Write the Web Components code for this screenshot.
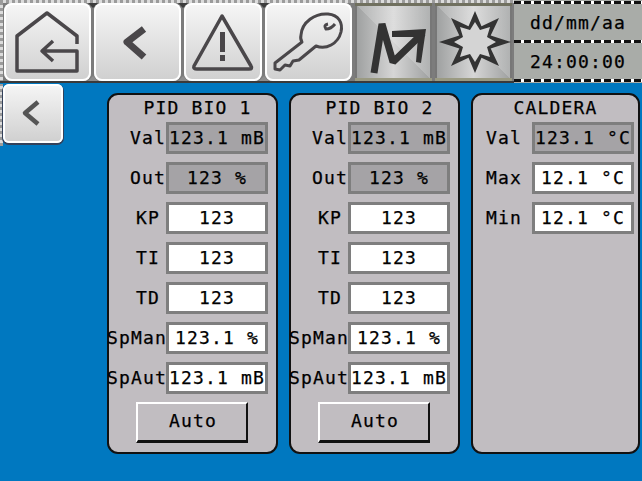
<!DOCTYPE html>
<html lang="es">
<head>
<meta charset="utf-8">
<title>PID BIO</title>
<style>
    html, body { margin: 0; height: 100%; background: #0078c0; overflow: hidden; }
    body { font: 18px "DejaVu Sans Mono", monospace; letter-spacing: 1.16px; color: #000; -webkit-text-stroke: 0.25px #000; }
    svg { display: block; width: 100%; height: 100%; }
    .line { fill: none; stroke: #4a474a; stroke-width: 3.5; stroke-linejoin: round; }
    .metal { fill: #333; stroke: none; }
</style>
</head>
<body>
<hmi-screen>
    <hmi-topbar slot="top">
        <hmi-button style="width:87px">
            <svg viewBox="4 3 87 78"><path class="line" d="M77 44V36L47 13 17 36V71H77V51H42M53 41 42 51 53 61"/></svg>
        </hmi-button>
        <hmi-button style="width:87px">
            <svg viewBox="94 3 87 78"><path class="line" style="stroke-width:7" d="M144 29 127 42 144 57"/></svg>
        </hmi-button>
        <hmi-button style="width:78px">
            <svg viewBox="184 3 78 78">
                <path class="line" d="M222 16 194 66Q193 69 197 69H249Q253 69 251 66Z"/>
                <path d="M220 32H225V52H220ZM220 55H225V61H220Z" fill="#4a474a"/>
            </svg>
        </hmi-button>
        <hmi-button style="width:87px" last>
            <svg viewBox="265 3 87 78">
                <path class="line" style="stroke-width:3" d="M301 35C302 22 315 13 328 14 339 15 343 23 341 32 338 44 326 50 316 46L299 60 293 61 290 66 285 65 280 70 275 69 275 63 302 42Q300 39 301 35Z"/>
                <path class="line" style="stroke-width:3" d="M328 24Q323 25 326 29 331 29 335 24"/>
            </svg>
        </hmi-button>
        <hmi-button style="width:77px" metal>
            <svg viewBox="355 3 77 78">
                <path d="M374 73 382 24 393 62 423 33" fill="none" stroke="#333" stroke-width="7" stroke-linejoin="bevel"/>
                <path class="metal" d="M392 31 426 29 421 63 416 62 418 37 392 37Z"/>
            </svg>
        </hmi-button>
        <hmi-button style="width:77px" metal>
            <svg viewBox="-40 -39 77 78">
                <path class="metal" d="M0-31 6.500-15.700 24-24 15.700-6.500 36 0 15.700 6.500 24 24 6.500 15.700 0 31-6.500 15.700-24 24-15.700 6.500-36 0-15.700-6.500-24-24-6.500-15.700Z"/>
                <path fill="#d4d4d4" d="M0-20 5-12 15-15 12-5 21 0 12 5 15 15 5 12 0 20-5 12-15 15-12 5-21 0-12-5-15-15-5-12Z"/>
            </svg>
        </hmi-button>
        <hmi-clock date="dd/mm/aa" time="24:00:00"></hmi-clock>
    </hmi-topbar>

    <hmi-side slot="side">
        <svg viewBox="3 84 60 59"><path class="line" style="stroke-width:4.500;stroke:#555" d="M38 102 25 113 38 124"/></svg>
    </hmi-side>

    <hmi-panel title="PID BIO 1" style="width:171px">
        <hmi-field label="Val" value="123.1 mB" readonly></hmi-field>
        <hmi-field label="Out" value="123 %" readonly></hmi-field>
        <hmi-field label="KP" value="123"></hmi-field>
        <hmi-field label="TI" value="123"></hmi-field>
        <hmi-field label="TD" value="123"></hmi-field>
        <hmi-field label="SpMan" value="123.1 %" wide></hmi-field>
        <hmi-field label="SpAut" value="123.1 mB" wide></hmi-field>
        <hmi-action>Auto</hmi-action>
    </hmi-panel>
    <hmi-panel title="PID BIO 2" style="width:171px">
        <hmi-field label="Val" value="123.1 mB" readonly></hmi-field>
        <hmi-field label="Out" value="123 %" readonly></hmi-field>
        <hmi-field label="KP" value="123"></hmi-field>
        <hmi-field label="TI" value="123"></hmi-field>
        <hmi-field label="TD" value="123"></hmi-field>
        <hmi-field label="SpMan" value="123.1 %" wide></hmi-field>
        <hmi-field label="SpAut" value="123.1 mB" wide></hmi-field>
        <hmi-action>Auto</hmi-action>
    </hmi-panel>
    <hmi-panel title="CALDERA" narrow style="width:169px">
        <hmi-field label="Val" value="123.1 °C" readonly></hmi-field>
        <hmi-field label="Max" value="12.1 °C"></hmi-field>
        <hmi-field label="Min" value="12.1 °C"></hmi-field>
    </hmi-panel>
</hmi-screen>

<script>
"use strict";
// small helper, every element here is just a style + markup in an open shadow root
class HmiElement extends HTMLElement {
    connectedCallback() {
        this.attachShadow({ mode: 'open' }).innerHTML = this.render();
    }
}

class HmiScreen extends HmiElement {
    render() {
        return `
            <style>
                :host { display: grid; grid-template: "top top" 83px "side main" 1fr / 107px 1fr; height: 481px; }
                top-area { grid-area: top; display: block; }
                side-area { grid-area: side; display: block; }
                main { grid-area: main; display: flex; gap: 11px; padding-top: 10px; align-items: flex-start; }
            </style>
            <top-area><slot name="top"></slot></top-area>
            <side-area><slot name="side"></slot></side-area>
            <main><slot></slot></main>
        `;
    }
}

class HmiTopbar extends HmiElement {
    render() {
        return `
            <style>
                :host {
                    display: flex;
                    height: 83px;
                    box-sizing: border-box;
                    padding: 3px 0 2px 4px;
                    gap: 3px;
                    background:
                        repeating-linear-gradient(90deg, #9b9b9b 0 3px, #dcdcdc 3px 6px) 0 0 / 100% 3px no-repeat,
                        repeating-linear-gradient(0deg, #9b9b9b 0 3px, #dcdcdc 3px 6px) 0 0 / 3px 100% no-repeat,
                        linear-gradient(#7c7c7c, #7c7c7c);
                    box-shadow: inset 0 -2px 0 #3a3a3a;
                }
            </style>
            <slot></slot>
        `;
    }
}

class HmiButton extends HmiElement {
    render() {
        return `
            <style>
                :host {
                    display: block;
                    position: relative;
                    height: 78px;
                    border-radius: 8px;
                    background: linear-gradient(#f6f6f6, #cfcfcf);
                    box-shadow: inset 0 0 0 2px #fff;
                }
                :host([metal]) {
                    border-radius: 0;
                    background:
                        linear-gradient(to top right, transparent 50%, rgba(255, 255, 255, .18) 50%),
                        linear-gradient(90deg, #9c9e9e, #d6d6d6 50%, #9c9e9e);
                    box-shadow: inset 0 3px 0 #70705f, inset 0 -3px 0 #9a9a82, inset 2px 0 0 #777, inset -2px 0 0 #777;
                }
                :host(:not([metal]):not([last]))::before,
                :host(:not([metal]):not([last]))::after {
                    content: "";
                    position: absolute;
                    right: -7px;
                    border: 5px solid transparent;
                    border-top-width: 0;
                    border-bottom-width: 0;
                }
                :host(:not([metal]):not([last]))::before { top: 0; border-top: 5px solid #3d3d3d; }
                :host(:not([metal]):not([last]))::after { bottom: 0; border-bottom: 5px solid #8e8e8e; }
            </style>
            <slot></slot>
        `;
    }
}

class HmiClock extends HmiElement {
    render() {
        return `
            <style>
                :host {
                    flex: 1;
                    display: flex;
                    flex-direction: column;
                    margin: -3px 0 -2px -1px;
                    padding: 1px 0 1px;
                    background: #a9aca8;
                }
                cell { flex: 1; display: flex; align-items: center; justify-content: center; }
                hr {
                    flex: none;
                    width: 100%;
                    height: 3px;
                    margin: 0;
                    border: 0;
                    background: repeating-linear-gradient(90deg, #111 0 7px, #fff 7px 10px);
                }
            </style>
            <hr>
            <cell>${this.getAttribute('date')}</cell>
            <hr>
            <cell>${this.getAttribute('time')}</cell>
            <hr>
        `;
    }
}

class HmiSide extends HmiElement {
    render() {
        return `
            <style>
                :host {
                    display: block;
                    height: 62px;
                    background: repeating-linear-gradient(0deg, #9b9b9b 0 3px, #dcdcdc 3px 6px) 0 0 / 3px 100% no-repeat;
                }
                button-box {
                    display: block;
                    width: 60px;
                    height: 59px;
                    margin: 1px 0 0 3px;
                    border-radius: 6px;
                    background: linear-gradient(#f6f6f6, #cfcfcf);
                    box-shadow: inset 0 0 0 2px #fff, 0 1px 0 1px #33415a;
                }
            </style>
            <button-box><slot></slot></button-box>
        `;
    }
}

class HmiPanel extends HmiElement {
    render() {
        return `
            <style>
                :host {
                    display: block;
                    box-sizing: border-box;
                    height: 361px;
                    border: 2px solid #111;
                    border-radius: 11px;
                    background: #c1bdc1;
                    --label-w: 40px;
                    --label-shift: -2px;
                    --field-end: 8px;
                }
                :host([narrow]) { --label-w: 56px; --label-shift: 0px; --field-end: 4px; }
                h2 {
                    margin: 0;
                    height: 27px;
                    font: inherit;
                    line-height: 25px;
                    text-align: center;
                    padding-left: 10px;
                }
                :host([narrow]) h2 { padding-left: 0; }
                rows { display: flex; flex-direction: column; gap: 8px; }
            </style>
            <h2>${this.getAttribute('title')}</h2>
            <rows><slot></slot></rows>
        `;
    }
}

class HmiField extends HmiElement {
    render() {
        return `
            <style>
                :host { display: flex; height: 32px; justify-content: flex-end; align-items: center; padding-right: var(--field-end); }
                label { width: var(--label-w); display: flex; justify-content: center; white-space: pre; margin: -2px var(--label-shift) 0 0; }
                :host([wide]) label { justify-content: flex-end; margin-right: -1px; }
                output {
                    width: 102px;
                    height: 32px;
                    box-sizing: border-box;
                    border: 3px solid #7e7e7e;
                    background: #fff;
                    display: flex;
                    justify-content: center;
                    align-items: center;
                    padding-bottom: 2px;
                    white-space: pre;
                }
                :host([readonly]) output { background: #a5a3a6; }
            </style>
            <label>${this.getAttribute('label')}</label>
            <output>${this.getAttribute('value')}</output>
        `;
    }
}

class HmiAction extends HmiElement {
    render() {
        return `
            <style>
                :host {
                    display: flex;
                    align-self: flex-start;
                    box-sizing: border-box;
                    width: 112px;
                    height: 41px;
                    margin-left: 27px;
                    padding: 0 0 3px 2px;
                    align-items: center;
                    justify-content: center;
                    border: solid;
                    border-width: 2px 2px 3px 2px;
                    border-color: #fff #111 #111 #fff;
                }
            </style>
            <slot></slot>
        `;
    }
}

customElements.define("hmi-screen", HmiScreen);
customElements.define("hmi-topbar", HmiTopbar);
customElements.define("hmi-button", HmiButton);
customElements.define("hmi-clock", HmiClock);
customElements.define("hmi-side", HmiSide);
customElements.define("hmi-panel", HmiPanel);
customElements.define("hmi-field", HmiField);
customElements.define("hmi-action", HmiAction);
</script>
</body>
</html>
